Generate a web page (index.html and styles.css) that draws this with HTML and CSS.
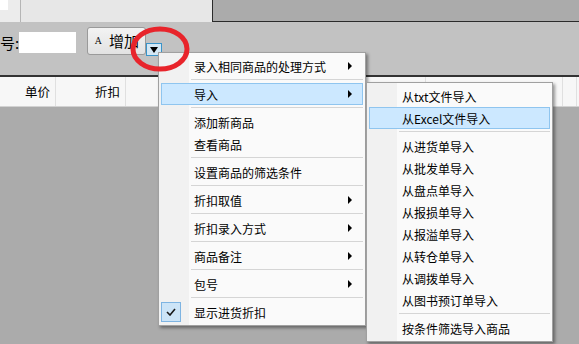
FILE: index.html
```html
<!DOCTYPE html>
<html lang="zh-CN">
<head>
  <meta charset="UTF-8" />
  <title>商品录入</title>
  <link rel="stylesheet" href="styles.css">
</head>
<body>
  <div class="window">

    <div class="tabs">
      <div class="tab-left">
        <div class="tab-stub"></div>
      </div>
      <div class="tab-rest"></div>
    </div>

    <div class="toolbar">
      <span class="label">号:</span>
      <input class="code-input" type="text" />
      <button class="add-btn"><span class="add-icon">A</span>增加</button>
      <span class="drop-btn"><span class="drop-arrow"></span></span>
    </div>

    <div class="grid-head">
      <div class="cell c1">单价</div>
      <div class="cell c2">折扣</div>
      <div class="cell c3"></div>
      <div class="cell c3"></div>
      <div class="cell c3"></div>
      <div class="cell c4"></div>
      <div class="cell c5"></div>
    </div>
    <div class="grid-body"></div>

    <!-- context menu -->
    <ul class="menu main-menu">
      <li class="item sub">录入相同商品的处理方式</li>
      <li class="sep"></li>
      <li class="item sub active">导入</li>
      <li class="sep"></li>
      <li class="item">添加新商品</li>
      <li class="item">查看商品</li>
      <li class="sep"></li>
      <li class="item">设置商品的筛选条件</li>
      <li class="sep"></li>
      <li class="item sub">折扣取值</li>
      <li class="sep"></li>
      <li class="item sub">折扣录入方式</li>
      <li class="sep"></li>
      <li class="item sub">商品备注</li>
      <li class="sep"></li>
      <li class="item sub">包号</li>
      <li class="sep"></li>
      <li class="item checked">
        <span class="check">
          <svg width="10" height="8" viewBox="0 0 10 8"><polyline points="1,4 4,7 9,1" fill="none" stroke="#1a1a1a" stroke-width="1.6"/></svg>
        </span>
        显示进货折扣
      </li>
    </ul>

    <ul class="menu sub-menu">
      <li class="item">从txt文件导入</li>
      <li class="item active">从Excel文件导入</li>
      <li class="sep"></li>
      <li class="item">从进货单导入</li>
      <li class="item">从批发单导入</li>
      <li class="item">从盘点单导入</li>
      <li class="item">从报损单导入</li>
      <li class="item">从报溢单导入</li>
      <li class="item">从转仓单导入</li>
      <li class="item">从调拨单导入</li>
      <li class="item">从图书预订单导入</li>
      <li class="sep"></li>
      <li class="item">按条件筛选导入商品</li>
    </ul>

    <svg class="mark" width="64" height="50" viewBox="0 0 64 50">
      <ellipse cx="31" cy="24" rx="27" ry="20" fill="none" stroke="#e8242b" stroke-width="5"/>
    </svg>
  </div>
</body>
</html>
```

FILE: styles.css
```css
body {
  margin: 0;
  font-family: "Noto Sans CJK SC", "Microsoft YaHei", sans-serif;
  font-size: 12px;
  color: #000;
}

.window {
  position: relative;
  width: 579px;
  height: 344px;
  overflow: hidden;
  display: flex;
  flex-direction: column;
  background: #ababab;
}

.tabs {
  display: flex;
  height: 22px;
}

.tab-left {
  width: 212px;
  background: #e7e7e7;
  border-left: 20px solid #ececec;
  box-sizing: border-box;
  position: relative;
  box-shadow: inset 1px 0 0 #b5b5b5;
}

.tab-stub {
  position: absolute;
  left: -20px;
  top: 0;
  width: 8px;
  height: 10px;
  background: #fff;
}

.tab-rest {
  flex: 1;
  background: #ababab;
  border-left: 1px solid #2b2b2b;
  border-bottom: 1px solid #2b2b2b;
}

.toolbar {
  height: 53px;
  background: #c2c2c2;
  border-bottom: 2px solid #333;
  display: flex;
  align-items: flex-start;
}

.label {
  font-size: 15px;
  line-height: 20px;
  margin-top: 11px;
  width: 19px;
}

.code-input {
  width: 57px;
  height: 21px;
  margin: 10px 0 0 0;
  padding: 0;
  border: none;
  background: #fff;
}

.add-btn {
  margin: 5px 0 0 11px;
  width: 59px;
  height: 28px;
  padding: 0 0 0 7px;
  border: 1px solid #9a9a9a;
  border-radius: 3px;
  background: linear-gradient(#f3f3f3, #e2e2e2);
  font-family: "Noto Sans CJK SC", sans-serif;
  font-size: 15px;
  line-height: 26px;
  text-align: left;
  display: flex;
  align-items: center;
}

.add-icon {
  font-family: "DejaVu Serif", serif;
  font-size: 9px;
  width: 14px;
}

.drop-btn {
  margin: 21px 0 0 0;
  width: 16px;
  height: 13px;
  box-sizing: border-box;
  border: 1px solid #3a94c9;
  background: #d4e7f4;
  display: flex;
  align-items: center;
  justify-content: center;
}

.drop-arrow {
  width: 0;
  height: 0;
  border-left: 4px solid transparent;
  border-right: 4px solid transparent;
  border-top: 6px solid #000;
}

.grid-head {
  height: 29px;
  background: #f7f7f7;
  border-bottom: 1px solid #d2d2d2;
  display: flex;
}

.cell {
  box-sizing: border-box;
  border-right: 1px solid #e0e0e0;
  font-size: 12.5px;
  line-height: 29px;
  text-align: right;
  padding-right: 5px;
}

.c1 { width: 56px; }
.c2 { width: 70px; }
.c3 { width: 100px; }
.c4 { width: 137px; }
.c5 { width: 14px; }

.grid-body {
  flex: 1;
  background: #ababab;
}

/* menus */
.menu {
  position: absolute;
  margin: 0;
  padding: 2px;
  list-style: none;
  border: 1px solid #a0a0a0;
  background: linear-gradient(to right, #f1f1f1 30px, #fafafa 30px);
  box-shadow: 2px 2px 3px rgba(0, 0, 0, 0.4);
}

.main-menu {
  left: 158px;
  top: 52px;
  width: 202px;
}

.sub-menu {
  left: 366px;
  top: 82px;
  width: 181px;
}

.item {
  position: relative;
  height: 22px;
  line-height: 21px;
  padding-left: 33px;
  box-sizing: border-box;
  border: 1px solid transparent;
  text-indent: -1px;
}

.item.active {
  background: #cce8ff;
  border-color: #8fc5ef;
}

.item.sub::after {
  content: "";
  position: absolute;
  right: 10px;
  top: 6px;
  border-top: 4px solid transparent;
  border-bottom: 4px solid transparent;
  border-left: 4px solid #000;
}

.sep {
  height: 6px;
  margin-left: 30px;
  background: linear-gradient(transparent 2px, #d5d5d5 2px, #d5d5d5 3px, transparent 3px);
}

.check {
  position: absolute;
  left: -1px;
  top: 0;
  width: 18px;
  height: 18px;
  border: 1px solid #7eb4e2;
  background: #cce4f7;
  display: flex;
  align-items: center;
  justify-content: center;
}

.mark {
  position: absolute;
  left: 129px;
  top: 25px;
}
```
